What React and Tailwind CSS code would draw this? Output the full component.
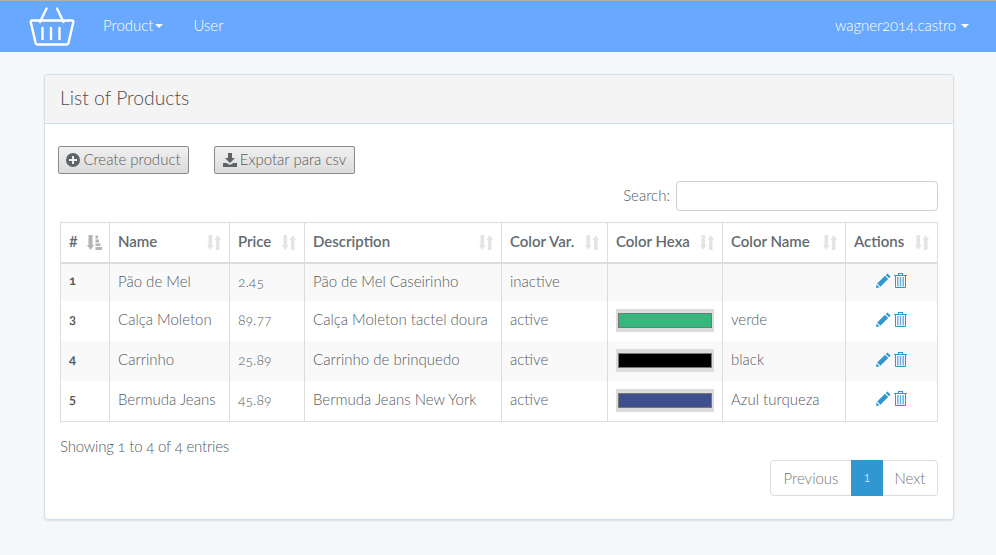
const rows = [
  { id: 1, name: 'Pão de Mel', price: '2.45', desc: 'Pão de Mel Caseirinho', status: 'inactive', color: null, colorName: '', h: 'h-[38px]', pad: 'pb-[2px]', iconPad: 'pb-[3px]', stripe: true },
  { id: 3, name: 'Calça Moleton', price: '89.77', desc: 'Calça Moleton tactel doura', status: 'active', color: 'bg-[#36b87c]', colorName: 'verde', h: 'h-[40px]', pad: 'pb-[2px]', iconPad: 'pb-[3px]' },
  { id: 4, name: 'Carrinho', price: '25.89', desc: 'Carrinho de brinquedo', status: 'active', color: 'bg-[#000000]', colorName: 'black', h: 'h-[40px]', pad: 'pb-[2px]', iconPad: 'pb-[3px]', stripe: true },
  { id: 5, name: 'Bermuda Jeans', price: '45.89', desc: 'Bermuda Jeans New York', status: 'active', color: 'bg-[#3f4e8c]', colorName: 'Azul turqueza', h: 'h-[41px]', pad: 'pb-[3px]', iconPad: 'pb-[4px]' },
]

const columns = [
  { label: '#', w: 'w-[49px]', active: true },
  { label: 'Name', w: 'w-[120px]' },
  { label: 'Price', w: 'w-[75px]' },
  { label: 'Description', w: 'w-[197px]' },
  { label: 'Color Var.', w: 'w-[106px]' },
  { label: 'Color Hexa', w: 'w-[115px]' },
  { label: 'Color Name', w: 'w-[123px]' },
  { label: 'Actions', w: 'w-[92px]' },
]

function Basket() {
  return (
    <svg width="46" height="40" viewBox="0 0 46 40" fill="none" stroke="white" strokeWidth="2.4" strokeLinecap="round" strokeLinejoin="round">
      <path d="M2.5 14.5 H42.5 C43.5 14.5 44 15.2 43.8 16.2 L39 37 C38.8 38 38.2 38.5 37.2 38.5 H8 C7 38.5 6.3 38 6.1 37 L1.3 16.2 C1.1 15.2 1.6 14.5 2.5 14.5 Z" transform="translate(0.5 -1)" />
      <path d="M11 15 L17.5 1.5 M34.5 15 L28 1.5" />
      <path d="M13.5 21 V32 M22 21 V32 M30.5 21 V32" />
    </svg>
  )
}

function Caret({ className = '' }) {
  return <span className={`inline-block w-0 h-0 border-x-4 border-x-transparent border-t-4 border-t-white ${className}`} />
}

function SortIcon({ active }) {
  if (active) {
    return (
      <svg width="15" height="15" viewBox="0 0 15 15" className="text-[#b4b4b4] -mr-px" fill="currentColor">
        <path d="M1.5 0 H5.5 V10 H7 L3.5 15 L0 10 H1.5 Z" />
        <path d="M8.5 0.5 H11 V3.5 H8.5 Z M8.5 4.5 H12 V7.5 H8.5 Z M8.5 8.5 H13.5 V11 H8.5 Z M8.5 12 H15 V15 H8.5 Z" />
      </svg>
    )
  }
  return (
    <svg width="14" height="15" viewBox="0 0 14 15" className="text-[#e4e4e4]" fill="currentColor">
      <path d="M1.5 0 H5 V10 H6.5 L3.25 15 L0 10 H1.5 Z" />
      <path d="M9 15 H12.5 V5 H14 L10.75 0 L7.5 5 H9 Z" />
    </svg>
  )
}

function Pencil() {
  return (
    <svg width="15" height="15" viewBox="0 0 15 15" fill="#3097d1">
      <path d="M11.4 0.4 L14.6 3.6 L13 5.2 L9.8 2 Z M9 2.8 L12.2 6 L4.4 13.8 L1.2 10.6 Z M0.6 11.4 L3.6 14.4 L0 15 Z" />
    </svg>
  )
}

function Trash() {
  return (
    <svg width="13" height="15" viewBox="0 0 13 15" fill="none" stroke="#3097d1">
      <path d="M0 2.5 H13 M4.5 2 V0.5 H8.5 V2" strokeWidth="1.2" />
      <path d="M1.5 3 V14.5 H11.5 V3" strokeWidth="1" />
      <path d="M3.8 4 V13.5 M6.5 4 V13.5 M9.2 4 V13.5" strokeWidth="1.4" opacity="0.75" />
    </svg>
  )
}

export default function App() {
  return (
    <div className="min-h-[555px] bg-[#f5f8fa] font-['Lato','Open_Sans',sans-serif] font-light text-[15px] text-[#555b5f]">
      {/* Navbar */}
      <nav className="h-[52px] bg-[#68a8ff] border-t border-[#b0b0b0] flex items-center pl-[29px] pr-[27px] text-white">
        <Basket />
        <a className="ml-[28px] mb-[2px] flex items-center gap-[2px]">
          Product
          <Caret />
        </a>
        <a className="ml-[30px] mb-[2px]">User</a>
        <a className="ml-auto mb-[2px] flex items-center gap-[5px] tracking-[-0.1px] oldstyle-nums">
          wagner2014.castro
          <Caret />
        </a>
      </nav>

      <main className="pt-[22px] pl-[44px] pr-[42px]">
        <div className="h-[446px] bg-white border border-[#d3e0e9] rounded shadow-[0_1px_2px_rgba(0,0,0,0.1)]">
          <div className="h-[49px] flex items-center pl-[15px] pb-[2px] bg-[#f5f4f5] border-b border-[#d3e0e9] rounded-t text-[19.3px] text-[#4f4f4f]">
            List of Products
          </div>

          <div className="pl-[13px] pr-[15px] pt-[22px]">
            <div className="flex gap-[25px]">
              <button className="w-[131px] h-[28px] pb-px flex items-center justify-center gap-[3px] rounded-[2px] border border-[#8a8a8a] bg-gradient-to-b from-[#f0f0f0] to-[#dcdcdc] text-[#5a5a5a]">
                <svg width="14" height="14" viewBox="0 0 14 14">
                  <circle cx="7" cy="7" r="7" fill="#5f6468" />
                  <path d="M6 3 H8 V6 H11 V8 H8 V11 H6 V8 H3 V6 H6 Z" fill="#eee" />
                </svg>
                Create product
              </button>
              <button className="w-[141px] h-[28px] pb-px flex items-center justify-center gap-[3px] rounded-[2px] border border-[#8a8a8a] bg-gradient-to-b from-[#f0f0f0] to-[#dcdcdc] text-[#5a5a5a]">
                <svg width="14" height="14" viewBox="0 0 14 14" fill="#5f6468">
                  <path d="M5 0 H9 V5 H12 L7 10 L2 5 H5 Z" />
                  <path d="M0 10 H3.5 L7 12 L10.5 10 H14 V14 H0 Z" />
                </svg>
                Expotar para csv
              </button>
            </div>

            <div className="mt-[7px] flex justify-end items-center gap-[6px]">
              <label className="mb-[2px]">Search:</label>
              <input className="w-[262px] h-[30px] bg-white border border-[#ccd0d2] rounded" />
            </div>

            <div className="pl-[2px] mt-[11px]">
              <table className="w-[877px] table-fixed border-collapse border border-[#dddddd]">
                <thead>
                  <tr className="h-[40px]">
                    {columns.map((c) => (
                      <th key={c.label} className={`${c.w} px-2 border border-[#dddddd] border-b-2 font-semibold text-[15px] text-left text-[#636b6f]`}>
                        <div className="flex items-center justify-between whitespace-nowrap">
                          <span className="-mt-[2px]">{c.label}</span>
                          <SortIcon active={c.active} />
                        </div>
                      </th>
                    ))}
                  </tr>
                </thead>
                <tbody>
                  {rows.map((r) => (
                    <tr key={r.id} className={`${r.h} ${r.stripe ? 'bg-[#f9f9f9]' : ''}`}>
                      <td className={`px-2 ${r.pad} border-x border-[#dddddd] font-bold text-[13px] oldstyle-nums`}>{r.id}</td>
                      <td className={`px-2 ${r.pad} border-x border-[#dddddd] whitespace-nowrap`}>{r.name}</td>
                      <td className={`px-2 ${r.pad} border-x border-[#dddddd] text-[14px] oldstyle-nums`}>{r.price}</td>
                      <td className={`px-2 ${r.pad} border-x border-[#dddddd] whitespace-nowrap`}>{r.desc}</td>
                      <td className={`px-2 ${r.pad} border-x border-[#dddddd]`}>{r.status}</td>
                      <td className="px-2 pb-[1px] border-x border-[#dddddd]">
                        {r.color && (
                          <div className="w-[98px] h-[23px] py-[4px] px-[2px] bg-[#dcdcdc]">
                            <div className={`h-full border border-[#777777] ${r.color}`} />
                          </div>
                        )}
                      </td>
                      <td className={`px-2 ${r.pad} border-x border-[#dddddd] whitespace-nowrap`}>{r.colorName}</td>
                      <td className={`px-2 ${r.iconPad} border-x border-[#dddddd]`}>
                        <div className="flex justify-center gap-[3px]">
                          <Pencil />
                          <Trash />
                        </div>
                      </td>
                    </tr>
                  ))}
                </tbody>
              </table>

              <div className="mt-[15px] leading-[18px] tracking-[-0.2px] oldstyle-nums">Showing 1 to 4 of 4 entries</div>

              <div className="mt-[5px] flex justify-end">
                <div className="flex h-[36px] border border-[#dddddd] rounded items-stretch text-[#777777]">
                  <a className="w-[80px] flex items-center justify-center">Previous</a>
                  <a className="w-[32px] -my-px flex items-center justify-center bg-[#3097d1] text-white text-[12px]">1</a>
                  <a className="w-[54px] flex items-center justify-center">Next</a>
                </div>
              </div>
            </div>
          </div>
        </div>
      </main>
    </div>
  )
}
